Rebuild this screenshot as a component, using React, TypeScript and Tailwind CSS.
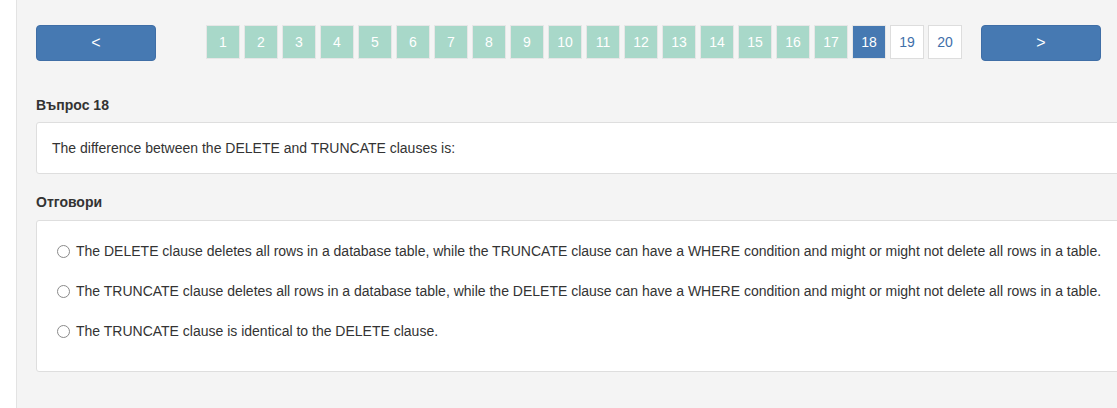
const pages = Array.from({ length: 20 }, (_, i) => i + 1);
const current = 18;

const answers = [
  'The DELETE clause deletes all rows in a database table, while the TRUNCATE clause can have a WHERE condition and might or might not delete all rows in a table.',
  'The TRUNCATE clause deletes all rows in a database table, while the DELETE clause can have a WHERE condition and might or might not delete all rows in a table.',
  'The TRUNCATE clause is identical to the DELETE clause.',
];

export default function App() {
  return (
    <div className="flex h-[408px] w-[1117px] overflow-hidden bg-[#f4f4f4] text-[14px] text-[#333] font-['Liberation_Sans',Arial,sans-serif]">
      <div className="w-[17px] shrink-0 border-r border-[#e3e3e3] bg-white" />

      <div className="flex shrink-0 flex-col pl-[19px] pt-[25px]">
        {/* navigation */}
        <div className="flex items-start">
          <button className="h-[36px] w-[120px] rounded-[4px] border border-[#3f6ea6] bg-[#4679b2] text-[16px] text-white">
            &lt;
          </button>
          <div className="ml-[50px] flex gap-[4px]">
            {pages.map(p => {
              const cls =
                p < current
                  ? 'border-[#e6e6e6] bg-[#a8d8c9] text-white'
                  : p === current
                    ? 'border-[#e6e6e6] bg-[#4679b2] text-white'
                    : 'border-[#dddddd] bg-white text-[#3f70aa]';
              return (
                <div key={p} className={`flex h-[34px] w-[34px] items-center justify-center border ${cls}`}>
                  {p}
                </div>
              );
            })}
          </div>
          <button className="ml-[19px] h-[36px] w-[120px] rounded-[4px] border border-[#3f6ea6] bg-[#4679b2] text-[16px] text-white">
            &gt;
          </button>
        </div>

        {/* question */}
        <h3 className="mt-[36px] font-bold leading-[16px]">Въпрос 18</h3>
        <div className="mt-[9px] flex h-[52px] w-[1100px] items-center rounded-[3px] border border-[#dedede] bg-white px-[15px]">
          The difference between the DELETE and TRUNCATE clauses is:
        </div>

        {/* answers */}
        <h3 className="mt-[20px] font-bold leading-[16px]">Отговори</h3>
        <div className="mt-[10px] flex h-[152px] w-[1100px] flex-col gap-[18px] rounded-[3px] border border-[#dedede] bg-white pl-[20px] pt-[19px]">
          {answers.map((a, i) => (
            <label key={i} className="flex h-[22px] items-center gap-[6px]">
              <span className="h-[13px] w-[13px] shrink-0 rounded-full border border-[#8a8a8a] bg-white" />
              <span>{a}</span>
            </label>
          ))}
        </div>
      </div>
    </div>
  );
}
